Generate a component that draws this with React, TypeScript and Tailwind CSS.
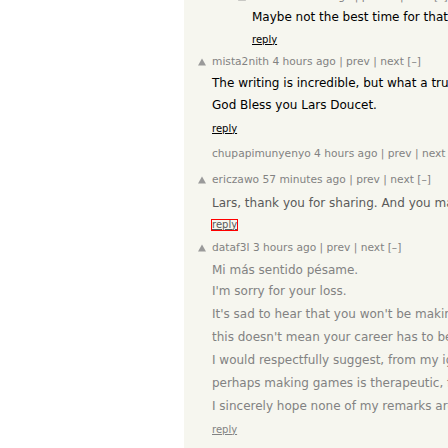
import React from "react";

const Arrow = () => (
  <svg width="10" height="10" viewBox="0 0 10 10" className="block">
    <polygon points="5,1.5 9,8.5 1,8.5" fill="#9a9a9a" />
  </svg>
);

function Head({ h, arrow = true, nested = false, children }: { h: string; arrow?: boolean; nested?: boolean; children: React.ReactNode }) {
  return (
    <div className={`flex items-center ${h} ${nested ? "pl-[53px]" : "pl-[13px]"} text-[10.67px] text-[#828282] whitespace-nowrap`}>
      <div className="w-[15px] shrink-0">{arrow ? <Arrow /> : null}</div>
      <span>{children}</span>
    </div>
  );
}

function Line({ h, color, nested = false, children }: { h: string; color: string; nested?: boolean; children: React.ReactNode }) {
  return (
    <div className={`flex items-center ${h} ${nested ? "pl-[68px]" : "pl-[28px]"} text-[12px] ${color} whitespace-nowrap`}>
      {children}
    </div>
  );
}

function Reply({ h, color, nested = false, boxed = false }: { h: string; color: string; nested?: boolean; boxed?: boolean }) {
  return (
    <div className={`flex items-center ${h} ${nested ? "pl-[68px]" : "pl-[28px]"} text-[10px] ${color} whitespace-nowrap`}>
      <span className={boxed ? "inline-block leading-[10px] outline outline-[#ff0000]" : ""}>
        <u>reply</u>
      </span>
    </div>
  );
}

export default function App() {
  return (
    <div className="w-[448px] h-[448px] overflow-hidden flex bg-white" style={{ fontFamily: '"DejaVu Sans", Verdana, sans-serif' }}>
      <div className="w-[184px] shrink-0 bg-white" />
      <div className="flex-1 bg-[#f6f6ef] overflow-hidden">
        <div className="-mt-[12.5px]">
          <Head h="h-[19px]" nested>ensorl 4 hours ago | parent | next [–]</Head>
          <Line h="h-[21px]" color="text-black" nested>Maybe not the best time for that right now.</Line>
          <Reply h="h-[23.5px]" color="text-black" nested />

          <Head h="h-[21.5px]">mista2nith 4 hours ago | prev | next [–]</Head>
          <Line h="h-[21px]" color="text-black">The writing is incredible, but what a truly sad story.</Line>
          <Line h="h-[23px]" color="text-black">God Bless you Lars Doucet.</Line>
          <Reply h="h-[23.5px]" color="text-black" />

          <Head h="h-[27.5px]" arrow={false}>chupapimunyenyo 4 hours ago | prev | next [–]</Head>

          <Head h="h-[25px]">ericzawo 57 minutes ago | prev | next [–]</Head>
          <Line h="h-[20.5px]" color="text-[#5a5a5a]">Lars, thank you for sharing. And you made a great game.</Line>
          <Reply h="h-[23.5px]" color="text-[#5a5a5a]" boxed />

          <Head h="h-[22.5px]">dataf3l 3 hours ago | prev | next [–]</Head>
          <Line h="h-[21px]" color="text-[#828282]">Mi más sentido pésame.</Line>
          <Line h="h-[22.5px]" color="text-[#828282]">I'm sorry for your loss.</Line>
          <Line h="h-[23px]" color="text-[#828282]">It's sad to hear that you won't be making games anymore,</Line>
          <Line h="h-[23px]" color="text-[#828282]">this doesn't mean your career has to be over.</Line>
          <Line h="h-[23px]" color="text-[#828282]">I would respectfully suggest, from my ignorance,</Line>
          <Line h="h-[23px]" color="text-[#828282]">perhaps making games is therapeutic, for some people.</Line>
          <Line h="h-[23px]" color="text-[#828282]">I sincerely hope none of my remarks are offensive.</Line>
          <Reply h="h-[23px]" color="text-[#828282]" />
        </div>
      </div>
    </div>
  );
}
